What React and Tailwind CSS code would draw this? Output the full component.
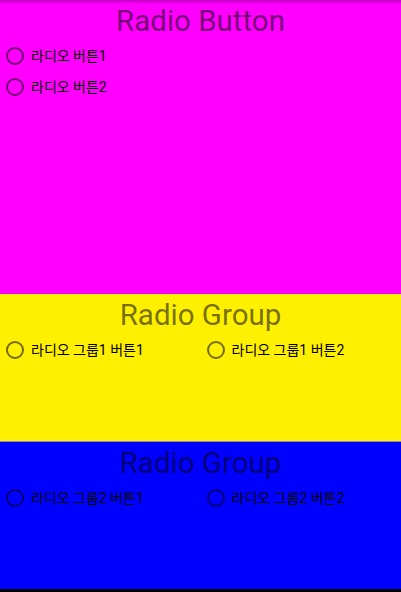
const font = { fontFamily: 'Roboto, "Noto Sans CJK KR", sans-serif' };

function Radio({ label }) {
  return (
    <div className="flex items-center h-[31px] pl-[6px] gap-[7px]">
      <span className="w-[18px] h-[18px] rounded-full border-2 border-black/55 shrink-0" />
      <span className="text-[14px] text-black leading-none">{label}</span>
    </div>
  );
}

function Title({ children }) {
  return (
    <h2 className="text-center text-[29.5px] leading-[38px] text-black/55 pt-[2px]">{children}</h2>
  );
}

export default function App() {
  return (
    <div className="w-[401px] h-[592px] flex flex-col bg-black overflow-hidden" style={font}>
      <section className="h-[294px] bg-[#ff00ff] relative">
        <div className="absolute inset-x-0 top-0 h-[4px] bg-gradient-to-b from-black/25 to-transparent" />
        <Title>Radio Button</Title>
        <div className="flex flex-col">
          <Radio label="라디오 버튼1" />
          <Radio label="라디오 버튼2" />
        </div>
      </section>

      <section className="h-[147px] bg-[#ffef00]">
        <Title>Radio Group</Title>
        <div className="grid grid-cols-2">
          <Radio label="라디오 그룹1 버튼1" />
          <Radio label="라디오 그룹1 버튼2" />
        </div>
      </section>

      <section className="h-[148px] bg-[#0000ff] border-t border-[#8c8cb4]">
        <Title>Radio Group</Title>
        <div className="grid grid-cols-2">
          <Radio label="라디오 그룹2 버튼1" />
          <Radio label="라디오 그룹2 버튼2" />
        </div>
      </section>
    </div>
  );
}
